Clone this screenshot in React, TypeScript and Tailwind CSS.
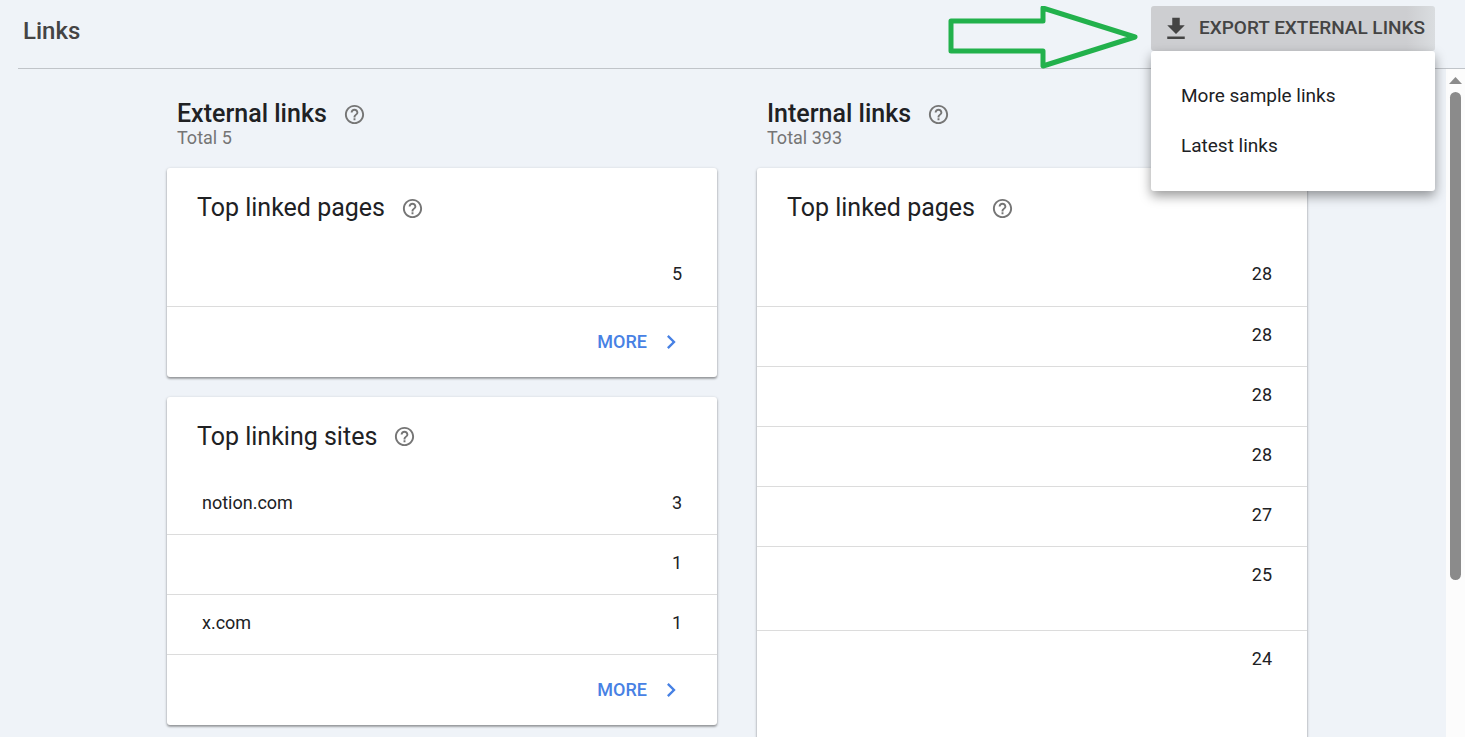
import React from 'react';
import { MdChevronRight, MdFileDownload, MdHelpOutline } from 'react-icons/md';

interface Row {
  label: string;
  count: number;
  size?: 'normal' | 'tall' | 'tallest';
}

const linkedPages: Row[] = [{ label: '', count: 5 }];

const linkingSites: Row[] = [
  { label: 'notion.com', count: 3 },
  { label: '', count: 1 },
  { label: 'x.com', count: 1 },
];

const internalPages: Row[] = [
  { label: '', count: 28 },
  { label: '', count: 28 },
  { label: '', count: 28 },
  { label: '', count: 28 },
  { label: '', count: 27 },
  { label: '', count: 25, size: 'tall' },
  { label: '', count: 24, size: 'tallest' },
];

const rowHeights = {
  normal: 'h-[60px]',
  tall: 'h-[84px]',
  tallest: 'h-[160px]',
};

const HelpButton: React.FC<{ topic: string }> = ({ topic }) => (
  <button type="button" aria-label={`Help: ${topic}`} className="text-[#757575]">
    <MdHelpOutline className="h-[23px] w-[23px]" />
  </button>
);

interface ColumnHeadingProps {
  title: string;
  total: number;
}

const ColumnHeading: React.FC<ColumnHeadingProps> = ({ title, total }) => (
  <div className="px-2.5 pt-8 pb-5">
    <div className="flex items-center gap-4">
      <h2 className="text-[25px] leading-[26px] font-medium">{title}</h2>
      <HelpButton topic={title} />
    </div>
    <p className="text-lg leading-[21px] text-[#757575]">Total {total}</p>
  </div>
);

interface LinkCardProps {
  title: string;
  rows: Row[];
  more?: boolean;
}

const LinkCard: React.FC<LinkCardProps> = ({ title, rows, more }) => (
  <section className="rounded-[3px] bg-white shadow-[0_1px_3px_rgba(0,0,0,0.3),0_2px_2px_rgba(0,0,0,0.2)]">
    <div className="flex h-[78px] items-center gap-4 px-[30px] pt-0.5">
      <h3 className="text-[25px] leading-8">{title}</h3>
      <HelpButton topic={title} />
    </div>
    <table aria-label={title} className="w-full text-lg leading-6">
      <tbody>
        {rows.map((row, i) => (
          <tr key={i} className="border-b border-[#dcdcdc]">
            <td className={`${rowHeights[row.size ?? 'normal']} pt-4 pl-[35px] align-top`}>{row.label}</td>
            <td className="pt-4 pr-[35px] text-right align-top">{row.count}</td>
          </tr>
        ))}
      </tbody>
    </table>
    {more && (
      <div className="flex h-[70px] items-center justify-end pr-8">
        <a href="#more" className="flex items-center gap-2.5 text-lg font-medium text-[#4781e4]">
          MORE
          <MdChevronRight className="h-7 w-7" />
        </a>
      </div>
    )}
  </section>
);

const Arrow: React.FC = () => (
  <svg width="192" height="64" viewBox="0 0 192 64" fill="none" aria-hidden="true">
    <path d="M4 15H96V2L188 31L96 60V45H4Z" stroke="#22b14c" strokeWidth="5" strokeLinejoin="round" />
  </svg>
);

const ExportMenu: React.FC = () => (
  <div className="relative z-10">
    <button
      type="button"
      aria-haspopup="menu"
      aria-expanded="true"
      className="flex h-[45px] items-center gap-2 rounded-[3px] bg-linear-to-r from-[#cdced1] from-90% to-[#dadde0] px-2.5 text-[19px] font-medium whitespace-nowrap text-[#444]"
    >
      <MdFileDownload className="h-[30px] w-[30px]" />
      EXPORT EXTERNAL LINKS
    </button>
    <div
      role="menu"
      className="absolute top-full right-0 left-0 flex flex-col rounded-[3px] bg-white py-5 text-[19px] shadow-[0_5px_12px_rgba(0,0,0,0.4)]"
    >
      <button type="button" role="menuitem" className="h-[50px] px-[30px] text-left">
        More sample links
      </button>
      <button type="button" role="menuitem" className="h-[50px] px-[30px] text-left">
        Latest links
      </button>
    </div>
  </div>
);

const Scrollbar: React.FC = () => (
  <div className="flex w-[19px] shrink-0 flex-col items-center gap-2 bg-[#fcfcfc] pt-2" aria-hidden="true">
    <svg width="13" height="7" viewBox="0 0 13 7">
      <path d="M0 7L6.500 0L13 7Z" fill="#8b8b8b" />
    </svg>
    <div className="h-[74%] w-[11px] rounded-full bg-[#8b8b8b]" />
  </div>
);

const App: React.FC = () => {
  return (
    <div className="flex h-screen flex-col overflow-hidden bg-[#eff3f8] font-['Roboto',sans-serif] text-[#202124]">
      <header className="ml-[18px] flex h-[69px] shrink-0 items-start border-b border-[#c0c4c9] pr-[30px] pl-[5px]">
        <h1 className="flex-1 pt-[15px] text-2xl font-medium text-[#444]">Links</h1>
        <div className="flex items-start gap-3 pt-1.5">
          <Arrow />
          <ExportMenu />
        </div>
      </header>

      <div className="flex min-h-0 flex-1">
        <main className="flex-1 overflow-hidden pl-7">
          <div className="mx-auto grid max-w-[1140px] grid-cols-2 gap-10">
            <div>
              <ColumnHeading title="External links" total={5} />
              <div className="flex flex-col gap-5">
                <LinkCard title="Top linked pages" rows={linkedPages} more />
                <LinkCard title="Top linking sites" rows={linkingSites} more />
              </div>
            </div>
            <div>
              <ColumnHeading title="Internal links" total={393} />
              <LinkCard title="Top linked pages" rows={internalPages} />
            </div>
          </div>
        </main>
        <Scrollbar />
      </div>
    </div>
  );
};

export default App;
